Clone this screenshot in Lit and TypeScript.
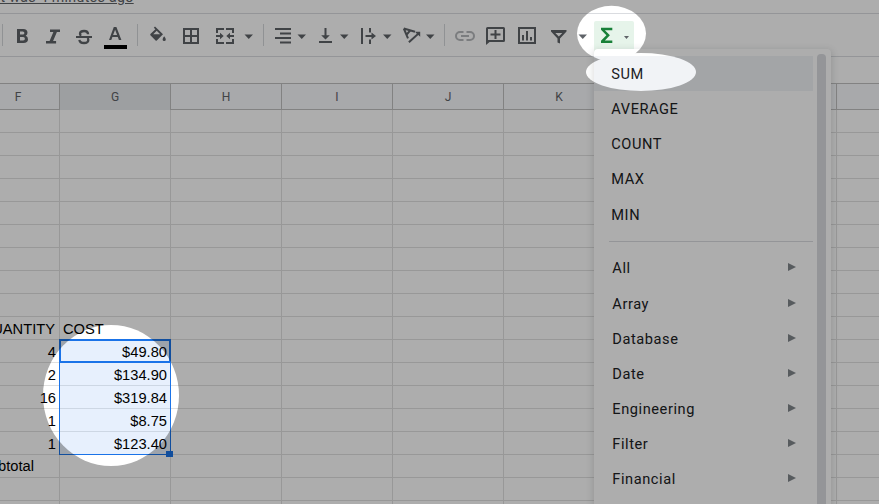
import { LitElement, html, svg, css, nothing } from "lit";
import { customElement } from "lit/decorators.js";

const COLUMNS = ["F", "G", "H", "I", "J", "K", "", "", ""];

const CELLS: Record<string, string[]> = {
  "9": ["QUANTITY", "COST"],
  "10": ["4", "$49.80"],
  "11": ["2", "$134.90"],
  "12": ["16", "$319.84"],
  "13": ["1", "$8.75"],
  "14": ["1", "$123.40"],
  "15": ["Subtotal", ""],
};

const FUNCTIONS = ["SUM", "AVERAGE", "COUNT", "MAX", "MIN"];
const CATEGORIES = ["All", "Array", "Database", "Date", "Engineering", "Filter", "Financial"];

const icons = {
  bold: svg`<path fill-rule="evenodd" d="M0 0h6.2q4.3 0 4.3 3.800 0 2.100-1.800 3 2.300.8 2.300 3.400 0 3.800-4.600 3.800H0zM3 2.400v3.100h2.800q1.600 0 1.600-1.550T5.800 2.400zM3 8v3.500h3.100q1.800 0 1.800-1.750T6.100 8z"/>`,
  italic: svg`<path d="M4 0h10v2.500h-3.100L7.100 11.500h3V14H0v-2.500h3.600L7.400 2.500H4z"/>`,
  strike: svg`<path d="M0 6h16v2H0z"/><path fill="none" stroke="currentColor" stroke-width="2.300" d="M12.100 4.300C12 2.400 10.700 1 8.100 1S4 2.200 4 3.800c0 .8.300 1.400 1 2M3.400 9.800C3.600 11.800 5.200 13 8 13s4.300-1.200 4.300-3c0-.8-.3-1.500-.8-2"/>`,
  color: svg`<path fill-rule="evenodd" d="M4.800 0h2.600l5 13H9.900L8.800 10H3.400L2.300 13H0zM6.100 2.700 4.100 8h4z"/>`,
  fill: svg`<path fill-rule="evenodd" d="M3.800.8 5 -.5l8 7.800-6.200 6.100q-.6.5-1.200 0L.4 8.200Q0 7.600.4 7l5-4.700zM6.700 3.800 3.200 7.200h7z"/><path d="M14.200 9.300q-1.600 2.100-1.600 3.100a1.600 1.600 0 0 0 3.200 0q0-1-1.600-3.100z"/>`,
  borders: svg`<path fill-rule="evenodd" d="M0 0h16v16H0zM2 2v5h5V2zM9 2v5h5V2zM2 9v5h5V9zM9 9v5h5V9z"/>`,
  merge: svg`<path d="M0 0h8v2H2v3H0zM10 0h8v5h-2V2h-6zM0 11h2v3h6v2H0zM16 11h2v5h-8v-2h6zM0 7h4V4.700L7.700 8 4 11.300V9H0zM18 7h-4V4.700L10.300 8l3.700 3.300V9h4z"/>`,
  align: svg`<path d="M0 0h16v2H0zM5 4.500h11v2H5zM0 9h16v2H0zM5 13.500h11v2H5z"/>`,
  valign: svg`<path d="M0 13h13v2H0zM5.500 0h2v7.200h3.300l-4.300 4.300-4.300-4.300h3.300z"/>`,
  wrap: svg`<path d="M0 0h2v16H0zM8 0h2v4.500H8zM8 11.500h2V16H8zM4.500 7h6V4.500L15 8l-4.500 3.500V9h-6z"/>`,
  rotate: svg`<path fill="none" stroke="currentColor" stroke-width="2" d="M.8 1.500 12 4.700M.8 1.500 5 11.300M7.500 3.200 3.700 7.500"/><path d="m5.200 14.600 8.600-7.900-1.700-1.900H17.200v5l-1.900-1.700-8.700 7.900z"/>`,
  link: svg`<path fill="none" stroke="currentColor" stroke-width="2" d="M8.500 1H5a4 4 0 0 0 0 8h3.500M11.500 1H15a4 4 0 0 1 0 8h-3.500M6 5h8"/>`,
  comment: svg`<path fill-rule="evenodd" d="M1.500 0h16Q19 0 19 1.500v12q0 1.500-1.500 1.500H3.600L0 18V1.500Q0 0 1.500 0zM2 2v11h15V2zM8.500 3h2v3.500h4v2h-4V12h-2V8.500h-4v-2h4z"/>`,
  chart: svg`<path fill-rule="evenodd" d="M0 0h18v17H0zM2 2v13h14V2zM4 8h2v5.500H4zM8 4h2v9.500H8zM12 10h2v3.500h-2z"/>`,
  filter: svg`<path fill-rule="evenodd" d="M0 0h15.500v1.500L9 8.500V13.500l-2.500-1V8.500L0 1.500zM4.300 3l3.500 3.500L11.300 3z"/>`,
  sigma: svg`<path d="M0 0h11.300v2.500H3.900l5 5.100-5 5.100h7.400v2.500H0v-2.100l5.400-5.500L0 2.100z"/>`,
};

type Tool = { icon: keyof typeof icons; x: number; y: number; cls?: string };

const TOOLS: Tool[] = [
  { icon: "bold", x: 17, y: 29 },
  { icon: "italic", x: 46, y: 29.5 },
  { icon: "strike", x: 76, y: 30 },
  { icon: "color", x: 109, y: 27 },
  { icon: "fill", x: 150, y: 27 },
  { icon: "borders", x: 183, y: 28 },
  { icon: "merge", x: 216, y: 28 },
  { icon: "align", x: 275, y: 28 },
  { icon: "valign", x: 319, y: 28 },
  { icon: "wrap", x: 361, y: 28 },
  { icon: "rotate", x: 403, y: 27 },
  { icon: "link", x: 455, y: 31, cls: "muted" },
  { icon: "comment", x: 486, y: 27 },
  { icon: "chart", x: 518, y: 27 },
  { icon: "filter", x: 551, y: 30 },
];

@customElement("sheet-toolbar")
class SheetToolbar extends LitElement {
  static styles = css`
    :host { display: block; height: 42px; border-top: 1px solid #dadce0; border-bottom: 1px solid #dadce0; background: #fff; }
    svg { display: block; color: #5f6368; fill: currentColor; }
    .muted { color: #b6b8bb; }
    .rule { fill: #d5d7da; }
    .ink { fill: #000; }
    .active { fill: #e6f4ea; }
    .green { color: #188038; }
  `;
  render() {
    return html`<svg width="879" height="42" viewBox="0 14 879 42">
      ${[2, 137, 263, 444].map((x) => svg`<rect class="rule" x=${x} y="24" width="1" height="22"/>`)}
      <rect class="ink" x="104" y="45" width="23" height="4"/>
      <rect class="active" x="594" y="21" width="40" height="34" rx="2"/>
      ${TOOLS.map((t) => svg`<g class=${t.cls ?? ""} fill="currentColor" transform="translate(${t.x} ${t.y})">${icons[t.icon]}</g>`)}
      <g class="green" fill="currentColor" transform="translate(601 27.700)">${icons.sigma}</g>
      ${[244.5, 297.5, 340, 383, 426, 578.5].map((x) => svg`<path d="M${x} 34.500h8.500l-4.250 4.500z"/>`)}
      <path d="M624 36h5l-2.500 3z"/>
    </svg>`;
  }
}

@customElement("sheet-grid")
class SheetGrid extends LitElement {
  static styles = css`
    :host { display: block; font-family: "Liberation Sans", Arial, sans-serif; }
    .row { display: grid; grid-template-columns: 83px repeat(8, 111px); width: 971px; margin-left: -23px; height: 23px; }
    .head { height: 25px; border-top: 1px solid #c0c0c0; border-bottom: 1px solid #c0c0c0; background: #f8f9fc;
      font: 12px/26px Roboto, sans-serif; color: #5f6368; text-align: center; }
    .head .cell { border-right: 1px solid #c0c0c0; }
    .head .picked { background: #e8eaed; }
    .cell { box-sizing: border-box; }
    .body .cell { border-right: 1px solid #e0e0e0; border-bottom: 1px solid #e0e0e0; padding: 0 3px; color: #000;
      font-size: 14.700px; line-height: 24px; height: 23px; white-space: nowrap; }
    .body .num { text-align: right; }
    .body .sel { background: #e7f0fd; border-bottom-color: #cdd7e4; }
    .body .lead { padding: 0 4px 0 3px; }
    .body .total { line-height: 22px; }
    .range { position: absolute; left: 59px; top: 339px; width: 110px; height: 114px; border: 1px solid #1a73e8; }
    .current { position: absolute; left: 59px; top: 339px; width: 108px; height: 20px; border: 2px solid #1a73e8; }
    .handle { position: absolute; left: 166px; top: 451px; width: 7px; height: 6px; background: #1a73e8; }
  `;
  render() {
    return html`
      <div class="row head">${COLUMNS.map((c) => html`<div class="cell ${c === "G" ? "picked" : ""}">${c}</div>`)}</div>
      ${Array.from({ length: 18 }, (_, r) => html`<div class="row body">${COLUMNS.map((_, c) => {
        const text = CELLS[String(r)]?.[c] ?? "";
        const data = r >= 10 && r <= 14;
        return html`<div class="cell ${data && c < 2 ? "num" : ""} ${data && c === 1 ? "sel" : ""} ${r === 9 ? "lead" : ""} ${r === 9 && c === 0 ? "num" : ""} ${r === 15 ? "total" : ""}">${text || nothing}</div>`;
      })}</div>`)}
      <div class="range"></div><div class="current"></div><div class="handle"></div>`;
  }
}

@customElement("function-menu")
class FunctionMenu extends LitElement {
  static styles = css`
    :host { display: flex; box-sizing: border-box; width: 237px; height: 470px; padding-top: 6.800px; background: #fff;
      border-radius: 4px; box-shadow: 0 2px 6px 2px rgba(60, 64, 67, 0.15);
      font: 14.600px/36.800px Roboto, sans-serif; letter-spacing: 0.570px; color: #202124; }
    .list { width: 219px; }
    .item { height: 35.200px; padding: 0 17px 0 17.300px; }
    .group { display: flex; justify-content: space-between; padding-left: 18.300px; line-height: 36.200px; }
    .first { background: #f1f3f6; }
    .divider { height: 1px; margin: 9.200px 0 8.400px 15px; background: #dadce0; }
    .arrow { width: 8px; height: 8px; margin-top: 13px; fill: #80868b; }
    .bar { width: 9px; margin: -2px 0 0 4px; border-radius: 4px 4px 0 0; background: #dadce0; }
  `;
  render() {
    return html`<div class="list">
        ${FUNCTIONS.map((f, i) => html`<div class="item ${i ? "" : "first"}">${f}</div>`)}
        <div class="divider"></div>
        ${CATEGORIES.map((f) => html`<div class="item group"><span>${f}</span><svg class="arrow" viewBox="0 0 8 8"><path d="M0 0l8 4-8 4z"/></svg></div>`)}
      </div><div class="bar"></div>`;
  }
}

@customElement("app-root")
class AppRoot extends LitElement {
  static styles = css`
    :host { display: block; position: relative; width: 879px; height: 504px; overflow: hidden; background: #fff; }
    .status { height: 13px; }
    .edit { display: block; width: max-content; margin-left: -52px; font: 14.200px/16px Roboto, sans-serif;
      letter-spacing: 0.320px; color: #5f6368; text-decoration: underline; transform: translateY(-11px); }
    .formula { height: 26px; }
    .menu { position: absolute; left: 594px; top: 49px; }
    .shade { position: absolute; left: 0; top: 0; }
  `;
  render() {
    return html`
      <div class="status"><span class="edit">Last edit was 4 minutes ago</span></div>
      <sheet-toolbar></sheet-toolbar>
      <div class="formula"></div>
      <sheet-grid></sheet-grid>
      <function-menu class="menu"></function-menu>
      <svg class="shade" width="879" height="504">
        <mask id="spots" maskUnits="userSpaceOnUse" x="0" y="0" width="879" height="504">
          <rect width="879" height="504" fill="#fff"/>
          <ellipse cx="611.500" cy="33.500" rx="34.500" ry="27.700"/>
          <ellipse cx="641" cy="72" rx="55" ry="19"/>
          <ellipse cx="111" cy="395.500" rx="68" ry="70.500"/>
        </mask>
        <rect width="879" height="504" fill="#000" fill-opacity="0.322" mask="url(#spots)"/>
      </svg>`;
  }
}
